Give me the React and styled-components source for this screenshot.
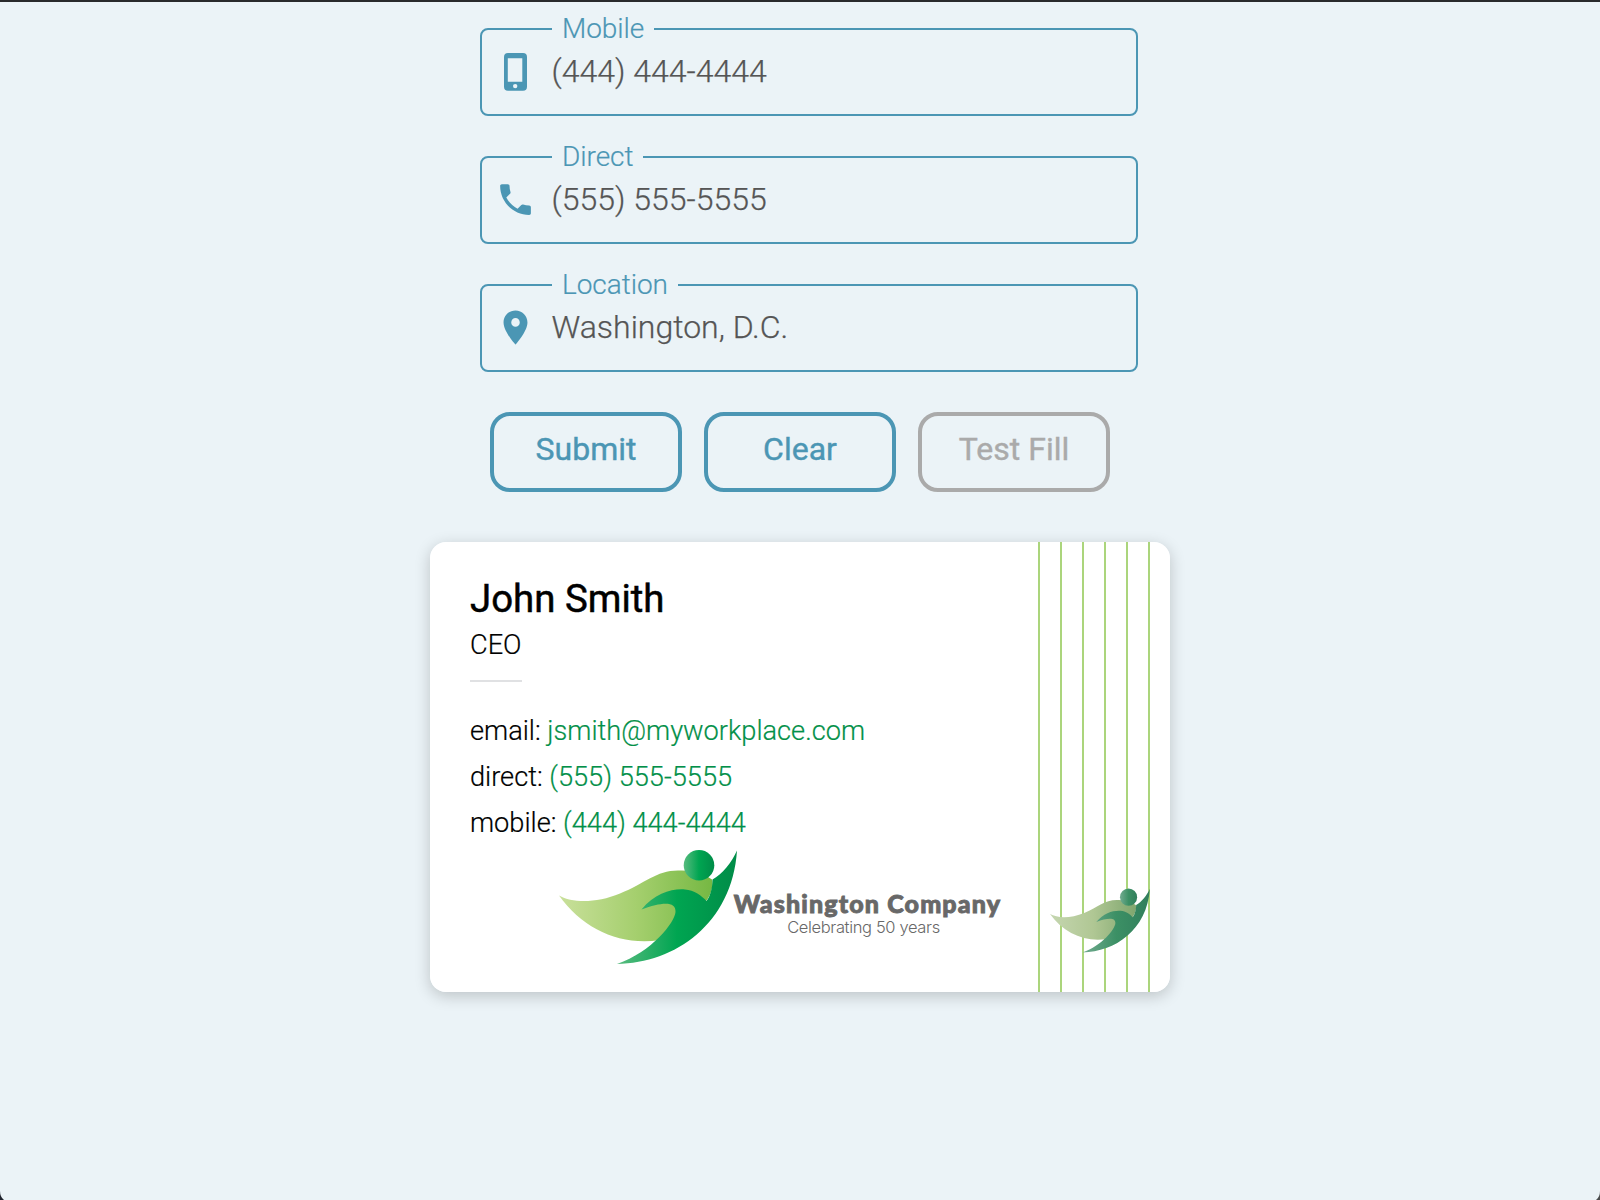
import React from "react";
import styled, { createGlobalStyle } from "styled-components";
import { MdPhone, MdLocationOn } from "react-icons/md";

const GlobalStyle = createGlobalStyle`
  * { box-sizing: border-box; }
  body {
    margin: 0;
    background: #ebf3f7;
    font-family: Roboto, "Liberation Sans", sans-serif;
    font-weight: 300;
  }
`;

const Page = styled.main`
  position: relative;
  width: 1600px;
  height: 1200px;
  overflow: hidden;
  border-top: 2px solid #292a2c;
  display: flex;
  flex-direction: column;
  align-items: center;
  padding-top: 26px;
`;

const WindowCorner = styled.svg`
  position: absolute;
  bottom: 0;
  ${(p) => (p.$side === "left" ? "left: 0;" : "right: 0; transform: scaleX(-1);")}
`;

const Form = styled.form`
  display: flex;
  flex-direction: column;
  gap: 40px;
  width: 640px;
`;

const Field = styled.label`
  position: relative;
  display: flex;
  align-items: flex-start;
  width: 658px;
  height: 88px;
  border: 2px solid #4b96b4;
  border-radius: 8px;
  padding: 20.5px 0 0 12.5px;
  gap: 15px;
`;

const Legend = styled.span`
  position: absolute;
  top: -18px;
  left: 70px;
  padding: 0 10px;
  background: #ebf3f7;
  color: #4b96b4;
  font-size: 28px;
  line-height: 34px;
  letter-spacing: -0.05px;
  -webkit-text-stroke: 0.2px;
`;

const FieldIcon = styled.span`
  display: flex;
  align-items: center;
  justify-content: center;
  width: 42px;
  height: 42px;
  flex: none;
  color: #4b96b4;
  font-size: 41px;
`;

const Value = styled.span`
  padding-top: 1px;
  color: #555;
  font-size: 32px;
  line-height: 38px;
  -webkit-text-stroke: 0.25px;
`;

const Actions = styled.div`
  display: flex;
  gap: 22px;
  padding-left: 10px;
`;

const Button = styled.button`
  width: 192px;
  height: 80px;
  flex: none;
  padding: 0 0 6px;
  border: 4px solid ${(p) => p.$color};
  border-radius: 20px;
  background: transparent;
  color: ${(p) => p.$color};
  font: 400 32px Roboto, sans-serif;
  -webkit-text-stroke: 0.4px;
`;

const CardShadow = styled.div`
  border-radius: 16px;
  margin-top: 50px;
  box-shadow: 0 4px 16px rgba(0, 0, 0, 0.2);
`;

const Card = styled.section`
  position: relative;
  display: flex;
  width: 740px;
  height: 450px;
  overflow: hidden;
  border-radius: 16px;
  background: #fff;
`;

const Details = styled.div`
  display: flex;
  flex-direction: column;
  align-items: flex-start;
  width: 608px;
  padding: 34px 0 0 40px;
  color: #000;
`;

const Name = styled.h1`
  margin: 0;
  font-size: 38.4px;
  font-weight: 400;
  line-height: 46px;
  -webkit-text-stroke: 0.5px;
`;

const Role = styled.div`
  padding: 4px 0 16px;
  margin-bottom: 26px;
  border-bottom: 2px solid #e0e1e3;
  font-size: 27.2px;
  line-height: 38px;
  -webkit-text-stroke: 0.2px;
`;

const Contact = styled.div`
  font-size: 27.2px;
  line-height: 46px;
  white-space: pre;
  -webkit-text-stroke: 0.2px;
`;

const ContactValue = styled.span`
  color: #039049;
`;

const Brand = styled.div`
  position: absolute;
  left: 129px;
  top: 307px;
  display: flex;
`;

const BrandText = styled.div`
  display: flex;
  flex-direction: column;
  align-items: center;
  width: 268px;
  margin: 40px 0 0 -5.5px;
  color: #686868;
`;

const BrandName = styled.div`
  font: 900 25px/28px Lato, sans-serif;
  letter-spacing: 1.15px;
  white-space: nowrap;
  -webkit-text-stroke: 0.9px;
`;

const Tagline = styled.div`
  font: 300 16.5px/20px Inter, sans-serif;
  letter-spacing: -0.35px;
  padding-right: 8px;
  white-space: nowrap;
`;

const Stripes = styled.div`
  display: flex;
  gap: 20px;
`;

const Stripe = styled.i`
  width: 2px;
  height: 450px;
  background: #abd57c;
`;

const Mark = styled.svg`
  display: block;
  overflow: visible;
`;

const Badge = styled.div`
  position: absolute;
  left: 620px;
  top: 345.5px;
`;

const vivid = {
  wing: ["#c9e09b", "#a5cf6e", "#76b843"],
  body: ["#58bb7f", "#00a551", "#008c48"],
};
const muted = {
  wing: ["#c5d6b0", "#b0c794", "#7fa66e"],
  body: ["#72ab90", "#3c9065", "#317e5c"],
};

function BirdMark({ id, width, palette }) {
  const stops = (c) => c.map((color, i) => (
    <stop key={i} offset={[0, 0.5, 1][i]} stopColor={color} />
  ));
  return (
    <Mark width={width} height={(width * 116) / 180} viewBox="0 0 180 116">
      <defs>
        <linearGradient id={id + "w"}>{stops(palette.wing)}</linearGradient>
        <linearGradient id={id + "b"}>{stops(palette.body)}</linearGradient>
      </defs>
      <path fill={`url(#${id}w)`} d="M0 46.500C14 54.500 38 54 61 44.500C86 34.500 97 21.500 119 21.500C130 21.500 143 23 153 30.500C155 37 151 48 147 52L128 72L101 91C61 97 24 80 0 46.500Z" />
      <path fill={`url(#${id}b)`} d="M82.5 60.500C96 44 113 39.500 126 40.500C135 41 143 47 147.500 52C151 48 153.500 39 153.500 30.500C163 25.500 173 13 178 1.500C173 75 116 114 58 115C93 103 116 73 116.500 63C117 52 103 53 82.500 60.500Z" />
      <circle cx="140" cy="16.300" r="15.300" fill={`url(#${id}b)`} />
    </Mark>
  );
}

function MobileIcon() {
  return (
    <svg width="42" height="42" viewBox="0 0 42 42" fill="none">
      <path
        fillRule="evenodd"
        fill="currentColor"
        d="M13 2H28a4 4 0 0 1 4 4V35.800a4 4 0 0 1-4 4H13a4 4 0 0 1-4-4V6a4 4 0 0 1 4-4ZM12.800 7.200V30.700H27.300V7.200ZM20.200 32.900a2.200 2.200 0 1 0 0 4.400a2.200 2.200 0 1 0 0-4.400Z"
      />
    </svg>
  );
}

const fields = [
  { label: "Mobile", value: "(444) 444-4444", Icon: MobileIcon },
  { label: "Direct", value: "(555) 555-5555", Icon: MdPhone },
  { label: "Location", value: "Washington, D.C.", Icon: MdLocationOn },
];

const contacts = [
  ["email: ", "jsmith@myworkplace.com"],
  ["direct: ", "(555) 555-5555"],
  ["mobile: ", "(444) 444-4444"],
];

export default function App() {
  return (
    <Page>
      <GlobalStyle />
      <Form onSubmit={(e) => e.preventDefault()}>
        {fields.map(({ label, value, Icon }) => (
          <Field key={label}>
            <Legend>{label}</Legend>
            <FieldIcon><Icon /></FieldIcon>
            <Value>{value}</Value>
          </Field>
        ))}
        <Actions>
          <Button type="submit" $color="#4b96b4">Submit</Button>
          <Button type="button" $color="#4b96b4">Clear</Button>
          <Button type="button" $color="#aaaaaa">Test Fill</Button>
        </Actions>
      </Form>
      <CardShadow>
        <Card>
          <Details>
            <Name>John Smith</Name>
            <Role>CEO</Role>
            {contacts.map(([label, value]) => (
              <Contact key={label}>{label}<ContactValue>{value}</ContactValue></Contact>
            ))}
          </Details>
          <Stripes>
            {[0, 1, 2, 3, 4, 5].map((n) => <Stripe key={n} />)}
          </Stripes>
          <Brand>
            <BirdMark id="logo" width={180} palette={vivid} />
            <BrandText>
              <BrandName>Washington Company</BrandName>
              <Tagline>Celebrating 50 years</Tagline>
            </BrandText>
          </Brand>
          <Badge><BirdMark id="badge" width={101} palette={muted} /></Badge>
        </Card>
      </CardShadow>
      <WindowCorner $side="left" width="4" height="9" viewBox="0 0 4 9">
        <path d="M0 0Q0 6 4 9H0Z" fill="#20242e" />
      </WindowCorner>
      <WindowCorner $side="right" width="4" height="9" viewBox="0 0 4 9">
        <path d="M0 0Q0 6 4 9H0Z" fill="#4a4c4c" />
      </WindowCorner>
    </Page>
  );
}
